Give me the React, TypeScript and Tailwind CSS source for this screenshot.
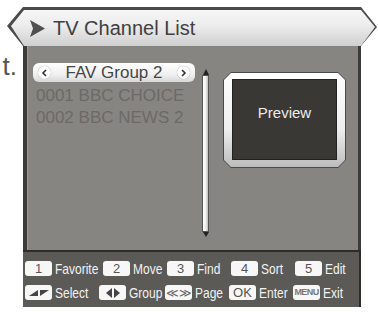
import React from "react";

const Badge = ({ children, className = "" }: { children: React.ReactNode; className?: string }) => (
  <span
    className={`flex h-[15px] w-[27px] shrink-0 items-center justify-center overflow-hidden rounded-[3px] bg-[#f7f7f7] text-[13px] leading-none text-[#555] ${className}`}
  >
    {children}
  </span>
);

const Key = ({ badge, label, badgeClass }: { badge: React.ReactNode; label: string; badgeClass?: string }) => (
  <div className="flex items-center gap-[3px]">
    <Badge className={badgeClass}>{badge}</Badge>
    <span className="inline-block origin-left scale-x-[0.8] whitespace-nowrap text-[15px] leading-none text-[#f2f2f2]">
      {label}
    </span>
  </div>
);

const UpDown = () => (
  <svg width="20" height="8" viewBox="0 0 20 8">
    <polygon points="0,7 9,7 9,1" fill="#444" />
    <polygon points="11,1 20,1 11,7" fill="#444" />
  </svg>
);

const LeftRight = () => (
  <svg width="14" height="10" viewBox="0 0 14 10">
    <polygon points="6,0 6,10 0,5" fill="#444" />
    <polygon points="8,0 8,10 14,5" fill="#444" />
  </svg>
);

const Circle = ({ dir }: { dir: "l" | "r" }) => (
  <span className="flex h-[13px] w-[13px] items-center justify-center rounded-full bg-white shadow-[0_0_1px_#888]">
    <svg width="7" height="8" viewBox="0 0 7 8">
      <polyline
        points={dir === "l" ? "5,1 2,4 5,7" : "2,1 5,4 2,7"}
        fill="none"
        stroke="#333"
        strokeWidth="1.6"
      />
    </svg>
  </span>
);

export default function App() {
  return (
    <div className="h-[312px] w-[378px] overflow-hidden bg-white" style={{ fontFamily: '"Liberation Sans", Arial, sans-serif' }}>
      {/* title bar */}
      <div className="ml-[7px] mt-[7px] h-[39px] w-[370px] bg-[#4a4a4a] pl-[4px] pr-[2px] pt-[3px] [clip-path:polygon(16px_0,354px_0,370px_20px,354px_39px,16px_39px,0_19px)]">
        <div className="flex h-[36px] items-center bg-[linear-gradient(180deg,#f6f6f6_0%,#ececec_45%,#cfcfcf_100%)] pl-[19px] [clip-path:polygon(13px_0,350px_0,364px_17px,350px_36px,13px_36px,0_16px)]">
          <svg width="15" height="17" viewBox="0 0 15 17">
            <polygon points="0,0 15,8.5 0,17 3,8.5" fill="#505050" />
          </svg>
          <span className="ml-[8px] text-[20px] leading-none text-[#404040]">TV Channel List</span>
        </div>
      </div>

      <div className="flex">
        {/* left gutter with text cut by the panel */}
        <div className="w-[23px] shrink-0">
          <div className="mt-[7px] w-[17px] text-right text-[26px] leading-none text-[#555]">t.</div>
        </div>

        <div className="w-[338px]">
          {/* main panel */}
          <div className="flex h-[204px] border-l-[4px] border-r-[3px] border-[#3c3b39] bg-[#878581] pl-[6px] shadow-[inset_1px_0_0_#9a9894]">
            <div className="w-[162px] pt-[17px]">
              <div className="flex h-[19px] items-center justify-between rounded-[6px] bg-[linear-gradient(180deg,#ffffff_0%,#f0f0f0_60%,#d8d8d8_100%)] px-[5px]">
                <Circle dir="l" />
                <span className="text-[17px] leading-none text-[#454545]">FAV Group 2</span>
                <Circle dir="r" />
              </div>
              <div className="mt-[3px] pl-[3px] text-[17px] leading-[22px] text-[#6c6a67]">
                <div>0001 BBC CHOICE</div>
                <div>0002 BBC NEWS 2</div>
              </div>
            </div>

            {/* scrollbar */}
            <div className="ml-[7px] mt-[23px] flex w-[7px] flex-col items-center">
              <svg width="6" height="6" viewBox="0 0 6 6">
                <polygon points="3,0 6,6 0,6" fill="#222" />
              </svg>
              <div className="h-[157px] w-[7px] border border-[#555] bg-[linear-gradient(90deg,#ffffff_0%,#f2f2f2_50%,#bdbdbd_100%)]" />
              <svg width="6" height="5" viewBox="0 0 6 5">
                <polygon points="0,0 6,0 3,5" fill="#222" />
              </svg>
            </div>

            {/* preview */}
            <div className="ml-[14px] mt-[26px] h-[96px] w-[123px] bg-[#4a4a4a] p-[1px] [clip-path:polygon(8px_0,115px_0,123px_8px,123px_88px,115px_96px,8px_96px,0_88px,0_8px)]">
              <div className="h-full w-full bg-[linear-gradient(180deg,#ffffff_0%,#eeeeee_60%,#bcbcbc_100%)] pb-[7px] pl-[8px] pr-[8px] pt-[6px] [clip-path:polygon(7px_0,114px_0,121px_7px,121px_87px,114px_94px,7px_94px,0_87px,0_7px)]">
                <div className="flex h-full w-full items-center justify-center border border-[#222] bg-[#3a3834] pb-[14px]">
                  <span className="text-[15px] leading-none text-[#ececec]">Preview</span>
                </div>
              </div>
            </div>
          </div>

          {/* footer */}
          <div className="flex h-[57px] flex-col gap-[9px] border-r-[2px] border-t-[2px] border-[#2e2d2b] bg-[#5c5a57] pl-[2px] pt-[9px]">
            <div className="grid grid-cols-[78px_64px_64px_64px_1fr]">
              <Key badge="1" label="Favorite" />
              <Key badge="2" label="Move" />
              <Key badge="3" label="Find" />
              <Key badge="4" label="Sort" />
              <Key badge="5" label="Edit" />
            </div>
            <div className="grid grid-cols-[74px_66px_64px_64px_1fr]">
              <Key badge={<UpDown />} label="Select" badgeClass="w-[25px]" />
              <Key badge={<LeftRight />} label="Group" badgeClass="w-[25px]" />
              <Key badge={<span className="text-[12px] text-[#666]">≪≫</span>} label="Page" />
              <Key badge={<span className="text-[13px]">OK</span>} label="Enter" />
              <Key
                badge={<span className="text-[9px] font-bold tracking-[-0.6px] text-[#777]">MENU</span>}
                label="Exit"
              />
            </div>
          </div>
        </div>
      </div>
    </div>
  );
}
